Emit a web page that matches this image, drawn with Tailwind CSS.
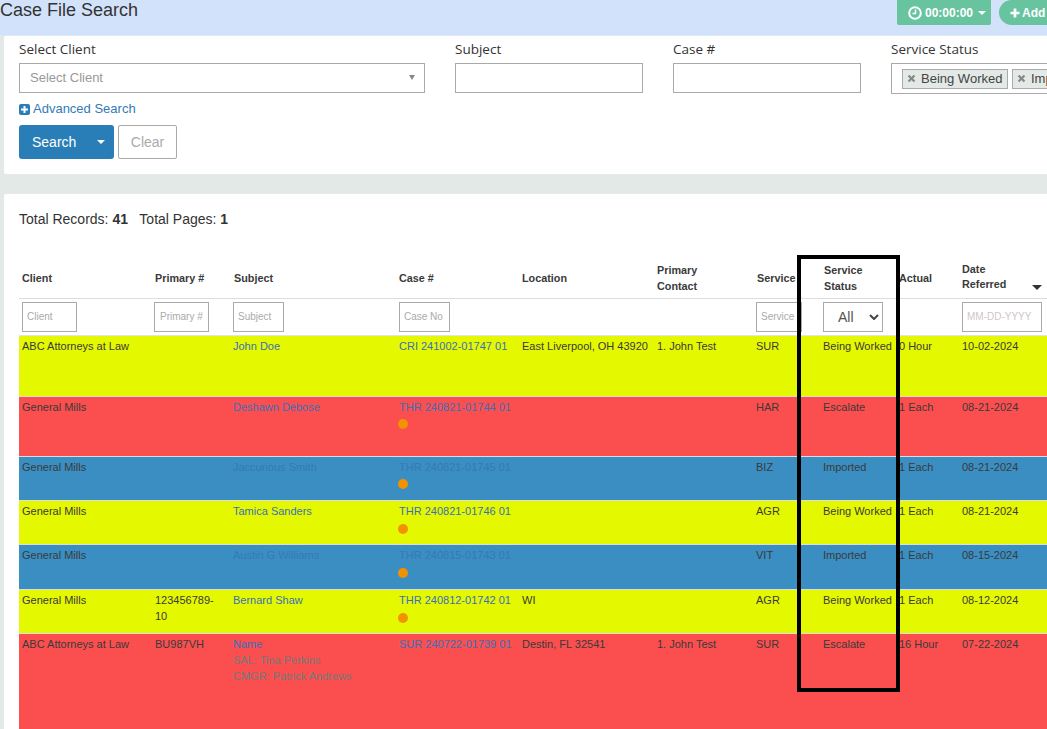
<!DOCTYPE html>
<html lang="en">
 <head>
  <meta charset="utf-8"/>
  <title>Case File Search</title>
  <script src="https://cdn.jsdelivr.net/npm/@tailwindcss/browser@4"></script>
 </head>
 <body class="relative h-[729px] overflow-hidden bg-[#e3e9e6] font-['Liberation_Sans',sans-serif] text-[#333]">
  <!-- page header -->
  <header class="flex h-[36px] items-start justify-between border-b border-[#dfe8f5] bg-[#d2e2fb]">
   <h1 class="text-[18px] leading-[20px] text-[#333]">Case File Search</h1>
   <div class="flex items-start gap-[8px] text-[12px] font-bold text-white">
    <button class="flex h-[25px] w-[94px] items-center gap-[3px] rounded-b-[2px] bg-[#68c39f] pl-[11px]">
     <svg class="h-[14px] w-[14px]" viewBox="0 0 14 14" fill="none" stroke="white"><circle cx="7" cy="7" r="5.8" stroke-width="2"/><path d="M7.500 3.500V7.500H4.500" stroke-width="1.500"/></svg>
     00:00:00
     <span class="ml-[2px] h-0 w-0 border-x-[4px] border-t-[4px] border-x-transparent border-t-white"></span>
    </button>
    <button class="flex h-[25px] w-[48px] items-center gap-[2px] rounded-l-[14px] bg-[#68c39f] pl-[11px]">
     <svg class="h-[10px] w-[10px] shrink-0" viewBox="0 0 11 11" fill="white"><path d="M4 0.500h3v3.500h3.500v3H7v3.500H4V7H0.500V4H4z"/></svg>
     Add
    </button>
   </div>
  </header>

  <!-- search panel -->
  <section class="ml-[4px] h-[138px] overflow-hidden rounded-l-[2px] bg-white pl-[15px] pt-[5px]">
   <div class="flex gap-[30px] font-['Open_Sans',sans-serif] text-[13.5px] font-medium text-[#333]">
    <div class="w-[406px] shrink-0">
     <label class="block h-[22px] leading-[17px]">Select Client</label>
     <div class="flex h-[30px] items-center justify-between border border-[#aaa] pb-[1px] pl-[10px] pr-[9px] font-['Liberation_Sans',sans-serif] text-[13px] font-normal text-[#999]">
      Select Client
      <span class="h-0 w-0 border-x-[3px] border-t-[5px] border-x-transparent border-t-[#888]"></span>
     </div>
    </div>
    <div class="w-[188px] shrink-0">
     <label class="block h-[22px] leading-[17px]">Subject</label>
     <input class="block h-[30px] w-full border border-[#aaa]" type="text"/>
    </div>
    <div class="w-[188px] shrink-0">
     <label class="block h-[22px] leading-[17px]">Case #</label>
     <input class="block h-[30px] w-full border border-[#aaa]" type="text"/>
    </div>
    <div class="w-[200px] shrink-0">
     <label class="block h-[22px] leading-[17px]">Service Status</label>
     <div class="flex h-[31px] items-center gap-[4px] whitespace-nowrap border border-[#aaa] pl-[10px] font-['Liberation_Sans',sans-serif] text-[13px] font-normal text-[#444]">
      <span class="flex h-[20px] w-[106px] shrink-0 items-center gap-[5px] border border-[#aaa] bg-[#e3e9e6] pl-[4px]">
       <svg class="h-[9px] w-[9px] shrink-0" viewBox="0 0 9 9" stroke="#888" stroke-width="2.200"><path d="M1.500 1.500l6 6M7.500 1.500l-6 6"/></svg>
       Being Worked
      </span>
      <span class="flex h-[20px] w-[106px] shrink-0 items-center gap-[5px] border border-[#aaa] bg-[#e3e9e6] pl-[4px]">
       <svg class="h-[9px] w-[9px] shrink-0" viewBox="0 0 9 9" stroke="#888" stroke-width="2.200"><path d="M1.500 1.500l6 6M7.500 1.500l-6 6"/></svg>
       Imported
      </span>
     </div>
    </div>
   </div>
   <a class="mt-[6px] flex items-center gap-[3px] text-[13px] leading-[18px] text-[#337ab7]" href="#">
    <svg class="h-[11px] w-[11px]" viewBox="0 0 11 11"><rect width="11" height="11" rx="2" fill="#2a7eb8"/><path d="M4.500 2h2v2.500H9v2H6.500V9h-2V6.500H2v-2h2.500z" fill="white"/></svg>
    Advanced Search
   </a>
   <div class="mt-[7px] flex gap-[4px] text-[14px]">
    <button class="flex h-[34px] w-[95px] items-center justify-between rounded-[3px] bg-[#2a7eb8] pl-[13px] pr-[9px] text-white">
     Search
     <span class="h-0 w-0 border-x-[4px] border-t-[4px] border-x-transparent border-t-white"></span>
    </button>
    <button class="h-[34px] w-[59px] rounded-[2px] border border-[#aaa] text-[#aaa]">Clear</button>
   </div>
  </section>

  <!-- results panel -->
  <section class="ml-[4px] mt-[20px] h-[535px] overflow-hidden rounded-tl-[2px] bg-white pl-[15px] pt-[17px]">
   <p class="h-[47px] text-[14px] leading-[16px]">Total Records: <b>41</b>&nbsp;&nbsp; Total Pages: <b>1</b></p>
   <table class="w-[1030px] table-fixed border-collapse text-[11px] leading-[16px] text-[#3a3a3a]">
    <colgroup>
     <col class="w-[133px]"/><col class="w-[78px]"/><col class="w-[166px]"/><col class="w-[123px]"/><col class="w-[135px]"/><col class="w-[99px]"/><col class="w-[67px]"/><col class="w-[76px]"/><col class="w-[63px]"/><col class="w-[90px]"/>
    </colgroup>
    <thead>
     <tr class="h-[40px] border-b border-[#ddd] text-left text-[10.8px] font-bold [&>th]:px-[3px] [&>th]:align-middle">
      <th>Client</th><th>Primary #</th><th class="!pl-[4px]">Subject</th><th>Case #</th><th>Location</th><th>Primary<br/>Contact</th><th class="!pl-[4px]">Service</th><th class="!pl-[4px]">Service<br/>Status</th><th>Actual</th>
      <th class="relative !pb-[2px] leading-[15px]">Date<br/>Referred<span class="absolute right-[7px] top-[27px] h-0 w-0 border-x-[5px] border-t-[5px] border-x-transparent border-t-[#333]"></span></th>
     </tr>
     <tr class="h-[37px] border-b border-[#e3e3e3] [&>td]:px-[3px] [&>td]:align-middle">
      <td><input class="block h-[30px] w-[55px] border border-[#aaa] pl-[4px] text-[10px] placeholder:text-[#aaa]" placeholder="Client"/></td>
      <td><input class="-ml-[1px] block h-[30px] w-[55px] border border-[#aaa] pl-[5px] text-[10px] placeholder:text-[#aaa]" placeholder="Primary #"/></td>
      <td><input class="block h-[30px] w-[51px] border border-[#aaa] pl-[4px] text-[10px] placeholder:text-[#aaa]" placeholder="Subject"/></td>
      <td><input class="block h-[30px] w-[51px] border border-[#aaa] pl-[4px] text-[10px] placeholder:text-[#aaa]" placeholder="Case No"/></td>
      <td></td><td></td>
      <td><input class="block h-[30px] w-[46px] border border-[#aaa] pl-[4px] text-[10px] placeholder:text-[#aaa]" placeholder="Service"/></td>
      <td>
       <div class="relative w-[60px]">
        <select class="block h-[30px] w-full appearance-none border border-[#aaa] bg-white pl-[14px] text-[14px] text-[#555]"><option>All</option></select>
        <svg class="pointer-events-none absolute right-[4px] top-[12px] h-[6px] w-[10px]" viewBox="0 0 10 6" fill="none" stroke="#444" stroke-width="2"><path d="M1 1l4 4 4-4"/></svg>
       </div>
      </td>
      <td></td>
      <td><input class="block h-[30px] w-[80px] border border-[#aaa] pl-[4px] text-[10px] placeholder:text-[#cfc6c6]" placeholder="MM-DD-YYYY"/></td>
     </tr>
    </thead>
    <tbody class="[&_td]:px-[3px] [&_td]:pt-[2px] [&_td]:align-top [&_a]:text-[#3a70b8]">
     <tr class="h-[61px] border-b border-[#ddd] bg-[#e4f800]">
      <td>ABC Attorneys at Law</td><td></td><td><a href="#">John Doe</a></td><td><a href="#">CRI 241002-01747 01</a></td><td>East Liverpool, OH 43920</td><td>1. John Test</td><td>SUR</td><td>Being Worked</td><td>0 Hour</td><td>10-02-2024</td>
     </tr>
     <tr class="h-[60px] border-b border-[#ddd] bg-[#fb4f4f]">
      <td>General Mills</td><td></td><td><a href="#">Deshawn Debose</a></td><td><a href="#">THR 240821-01744 01</a><span class="-ml-[1px] mt-[4px] block h-[10px] w-[10px] rounded-full bg-[#f39200]"></span></td><td></td><td></td><td>HAR</td><td>Escalate</td><td>1 Each</td><td>08-21-2024</td>
     </tr>
     <tr class="h-[44px] border-b border-[#ddd] bg-[#3b8ec2] [&_a]:!text-[#337ab7]">
      <td>General Mills</td><td></td><td><a href="#">Jaccurious Smith</a></td><td><a href="#">THR 240821-01745 01</a><span class="-ml-[1px] mt-[4px] block h-[10px] w-[10px] rounded-full bg-[#f39200]"></span></td><td></td><td></td><td>BIZ</td><td>Imported</td><td>1 Each</td><td>08-21-2024</td>
     </tr>
     <tr class="h-[44px] border-b border-[#ddd] bg-[#e4f800]">
      <td>General Mills</td><td></td><td><a href="#">Tamica Sanders</a></td><td><a href="#">THR 240821-01746 01</a><span class="-ml-[1px] mt-[5px] block h-[10px] w-[10px] rounded-full bg-[#f39200]"></span></td><td></td><td></td><td>AGR</td><td>Being Worked</td><td>1 Each</td><td>08-21-2024</td>
     </tr>
     <tr class="h-[45px] border-b border-[#ddd] bg-[#3b8ec2] [&_a]:!text-[#337ab7]">
      <td>General Mills</td><td></td><td><a href="#">Austin G Williams</a></td><td><a href="#">THR 240815-01743 01</a><span class="-ml-[1px] mt-[5px] block h-[10px] w-[10px] rounded-full bg-[#f39200]"></span></td><td></td><td></td><td>VIT</td><td>Imported</td><td>1 Each</td><td>08-15-2024</td>
     </tr>
     <tr class="h-[44px] border-b border-[#ddd] bg-[#e4f800]">
      <td>General Mills</td><td class="!pr-[8px]">123456789-10</td><td><a href="#">Bernard Shaw</a></td><td><a href="#">THR 240812-01742 01</a><span class="-ml-[1px] mt-[5px] block h-[10px] w-[10px] rounded-full bg-[#f39200]"></span></td><td>WI</td><td></td><td>AGR</td><td>Being Worked</td><td>1 Each</td><td>08-12-2024</td>
     </tr>
     <tr class="h-[100px] bg-[#fb4f4f]">
      <td>ABC Attorneys at Law</td><td>BU987VH</td><td><a href="#">Name</a><br/><span class="text-[#777]">SAL: Tina Perkins</span><br/><span class="text-[#777]">CMGR: Patrick Andrews</span></td><td><a href="#">SUR 240722-01739 01</a></td><td>Destin, FL 32541</td><td>1. John Test</td><td>SUR</td><td>Escalate</td><td>16 Hour</td><td>07-22-2024</td>
     </tr>
    </tbody>
   </table>
  </section>

  <!-- highlight drawn over the service status column -->
  <div class="pointer-events-none absolute left-[797px] top-[255px] h-[437px] w-[103px] border-4 border-black"></div>
 </body>
</html>
